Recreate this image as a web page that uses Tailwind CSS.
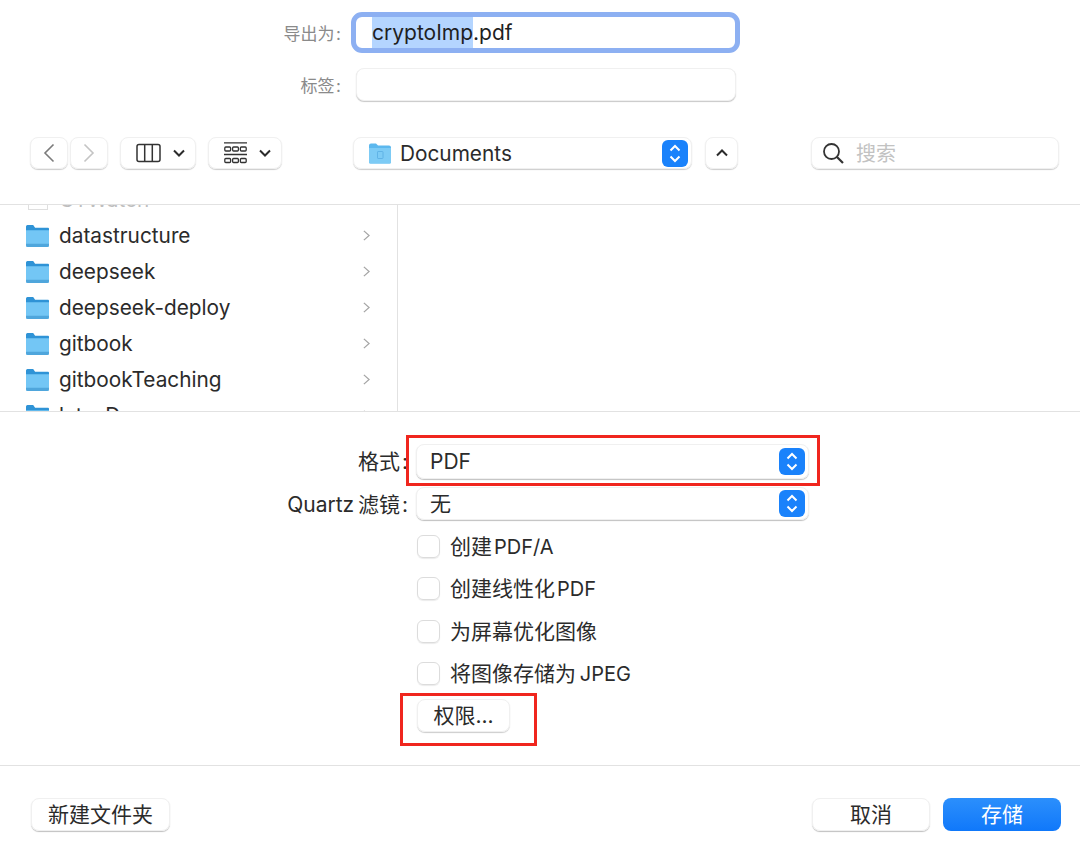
<!doctype html>
<html lang="zh">
<head>
<meta charset="utf-8">
<script src="https://cdn.jsdelivr.net/npm/@tailwindcss/browser@4"></script>
</head>
<body class="bg-white">
<div class="relative w-[1080px] h-[858px] overflow-hidden bg-white text-[#2b2b2b] text-[21px] font-['Inter','Noto_Sans_CJK_SC',sans-serif]">

  <!-- top -->
  <section class="h-[205px] border-b border-[#e2e2e2] flex flex-col">
    <div class="flex items-center h-[41px] mt-[12px]">
      <div class="w-[341px] mt-[4px] text-right text-[#8a8a8a] text-[17px]">导出为&#8202;:</div>
      <div class="ml-[10px] w-[389px] h-[41px] rounded-[11px] border-[5px] border-[#8db0f2] bg-white flex items-center pl-[16px] text-[#1f1f1f]"><span class="bg-[#b4d5ff]">cryptoImp</span>.pdf</div>
    </div>
    <div class="flex items-center h-[33px] mt-[15px]">
      <div class="w-[341px] mt-[4px] text-right text-[#8a8a8a] text-[17px]">标签&#8202;:</div>
      <div class="ml-[15px] w-[380px] h-[33px] rounded-[8px] border border-[#f0f0f0] shadow-[0_1px_1px_rgba(0,0,0,0.22)] bg-white"></div>
    </div>
    <div class="flex items-center h-[32px] mt-[36px]">
      <div class="ml-[30px] w-[38px] h-[32px] rounded-[8px] border border-[#f0f0f0] shadow-[0_1px_1px_rgba(0,0,0,0.2)] flex items-center justify-center">
        <svg width="12" height="20" viewBox="0 0 12 20" fill="none" stroke="#7b7b7b" stroke-width="1.6"><path d="M10.5 1.5 2 10l8.500 8.500"/></svg>
      </div>
      <div class="ml-[2px] w-[38px] h-[32px] rounded-[8px] border border-[#f0f0f0] shadow-[0_1px_1px_rgba(0,0,0,0.2)] flex items-center justify-center">
        <svg width="12" height="20" viewBox="0 0 12 20" fill="none" stroke="#c4c4c4" stroke-width="1.6"><path d="M1.500 1.500 10 10l-8.500 8.500"/></svg>
      </div>
      <div class="ml-[12px] w-[76px] h-[32px] rounded-[8px] border border-[#f0f0f0] shadow-[0_1px_1px_rgba(0,0,0,0.2)] flex items-center pl-[15px]">
        <svg width="25" height="20" viewBox="0 0 25 20" fill="none" stroke="#333" stroke-width="1.500"><rect x="1" y="1.500" width="23" height="17" rx="2"/><path d="M8.700 1.500v17M16.300 1.500v17"/></svg>
        <svg class="ml-[12px]" width="12" height="8" viewBox="0 0 12 8" fill="none" stroke="#2b2b2b" stroke-width="2"><path d="m1 1.500 5 5 5-5"/></svg>
      </div>
      <div class="ml-[12px] w-[74px] h-[32px] rounded-[8px] border border-[#f0f0f0] shadow-[0_1px_1px_rgba(0,0,0,0.2)] flex items-center pl-[15px]">
        <svg width="23" height="23" viewBox="0 0 23 23" fill="none" stroke="#333" stroke-width="1.300"><path d="M0 .800h23M0 12.500h23"/><rect x=".8" y="5" width="5.800" height="4" rx="1"/><rect x="8.600" y="5" width="5.800" height="4" rx="1"/><rect x="16.400" y="5" width="5.800" height="4" rx="1"/><rect x=".8" y="16.500" width="5.800" height="4" rx="1"/><rect x="8.600" y="16.500" width="5.800" height="4" rx="1"/><rect x="16.400" y="16.500" width="5.800" height="4" rx="1"/></svg>
        <svg class="ml-[12px]" width="12" height="8" viewBox="0 0 12 8" fill="none" stroke="#2b2b2b" stroke-width="2"><path d="m1 1.500 5 5 5-5"/></svg>
      </div>
      <div class="ml-[71px] w-[339px] h-[32px] rounded-[8px] border border-[#f0f0f0] shadow-[0_1px_1px_rgba(0,0,0,0.2)] flex items-center pl-[14px] pr-[3px]">
        <svg width="24" height="22" viewBox="0 0 24 22"><path d="M1 3.500a2 2 0 0 1 2-2h5l2 2h11a2 2 0 0 1 2 2V20a1.500 1.500 0 0 1-1.500 1.500h-19A1.500 1.500 0 0 1 1 20Z" fill="#5cb8ee"/><path d="M1 6h22v14a1.500 1.500 0 0 1-1.500 1.500h-19A1.500 1.500 0 0 1 1 20Z" fill="#7dcbf5"/><rect x="9.500" y="9.500" width="5.500" height="7" rx=".6" fill="none" stroke="#5cb0e4" stroke-width=".9"/></svg>
        <span class="ml-[8px] mt-[2px] flex-1 text-[20.8px]">Documents</span>
        <svg width="26" height="27" viewBox="0 0 26 27"><rect width="26" height="27" rx="6" fill="#1a82fb"/><path d="m8.500 10.500 4.500-4.500 4.500 4.500M8.500 16.500l4.500 4.500 4.500-4.500" fill="none" stroke="#fff" stroke-width="2"/></svg>
      </div>
      <div class="ml-[13px] w-[33px] h-[32px] rounded-[8px] border border-[#f0f0f0] shadow-[0_1px_1px_rgba(0,0,0,0.2)] flex items-center justify-center">
        <svg width="12" height="8" viewBox="0 0 12 8" fill="none" stroke="#2b2b2b" stroke-width="2"><path d="m1 6.500 5-5 5 5"/></svg>
      </div>
      <div class="ml-[73px] w-[248px] h-[32px] rounded-[8px] border border-[#f0f0f0] shadow-[0_1px_1px_rgba(0,0,0,0.2)] flex items-center pl-[10px]">
        <svg width="22" height="22" viewBox="0 0 22 22" fill="none" stroke="#333" stroke-width="1.800"><circle cx="9.500" cy="9.500" r="7.500"/><path d="m15 15 6 6" stroke-width="2.200"/></svg>
        <span class="ml-[12px] mt-[2px] text-[20px] text-[#c2c2c2]">搜索</span>
      </div>
    </div>
  </section>

  <!-- browser -->
  <section class="h-[207px] border-b border-[#e2e2e2] flex overflow-hidden">
    <div class="w-[398px] border-r border-[#e2e2e2] pl-[26px] pr-[27px] -mt-[24px] text-[20.8px]">
      <div class="h-[36px] flex items-center opacity-30">
        <div class="w-[23px] flex justify-center"><div class="w-[20px] h-[22px] border border-[#999]"></div></div>
        <span class="ml-[10px] mt-[2px] flex-1">GTWatch</span>
      </div>
      <div class="h-[36px] flex items-center">
        <svg width="23" height="23" viewBox="0 0 24 22" preserveAspectRatio="none"><path d="M0 2.500A1.500 1.500 0 0 1 1.500 1h6l2 2.500H23a1 1 0 0 1 1 1V20a2 2 0 0 1-2 2H2a2 2 0 0 1-2-2Z" fill="#2f93d6"/><path d="M0 6h24v14a2 2 0 0 1-2 2H2a2 2 0 0 1-2-2Z" fill="#73c6f5"/><path d="M0 19h24v1a2 2 0 0 1-2 2H2a2 2 0 0 1-2-2Z" fill="#4fa6dc"/></svg>
        <span class="ml-[10px] mt-[2px] flex-1">datastructure</span>
        <svg width="7" height="11" viewBox="0 0 8 14" preserveAspectRatio="none" fill="none" stroke="#a5a5a5" stroke-width="1.400"><path d="m1 1 6 6-6 6"/></svg>
      </div>
      <div class="h-[36px] flex items-center">
        <svg width="23" height="23" viewBox="0 0 24 22" preserveAspectRatio="none"><path d="M0 2.500A1.500 1.500 0 0 1 1.500 1h6l2 2.500H23a1 1 0 0 1 1 1V20a2 2 0 0 1-2 2H2a2 2 0 0 1-2-2Z" fill="#2f93d6"/><path d="M0 6h24v14a2 2 0 0 1-2 2H2a2 2 0 0 1-2-2Z" fill="#73c6f5"/><path d="M0 19h24v1a2 2 0 0 1-2 2H2a2 2 0 0 1-2-2Z" fill="#4fa6dc"/></svg>
        <span class="ml-[10px] mt-[2px] flex-1">deepseek</span>
        <svg width="7" height="11" viewBox="0 0 8 14" preserveAspectRatio="none" fill="none" stroke="#a5a5a5" stroke-width="1.400"><path d="m1 1 6 6-6 6"/></svg>
      </div>
      <div class="h-[36px] flex items-center">
        <svg width="23" height="23" viewBox="0 0 24 22" preserveAspectRatio="none"><path d="M0 2.500A1.500 1.500 0 0 1 1.500 1h6l2 2.500H23a1 1 0 0 1 1 1V20a2 2 0 0 1-2 2H2a2 2 0 0 1-2-2Z" fill="#2f93d6"/><path d="M0 6h24v14a2 2 0 0 1-2 2H2a2 2 0 0 1-2-2Z" fill="#73c6f5"/><path d="M0 19h24v1a2 2 0 0 1-2 2H2a2 2 0 0 1-2-2Z" fill="#4fa6dc"/></svg>
        <span class="ml-[10px] mt-[2px] flex-1">deepseek-deploy</span>
        <svg width="7" height="11" viewBox="0 0 8 14" preserveAspectRatio="none" fill="none" stroke="#a5a5a5" stroke-width="1.400"><path d="m1 1 6 6-6 6"/></svg>
      </div>
      <div class="h-[36px] flex items-center">
        <svg width="23" height="23" viewBox="0 0 24 22" preserveAspectRatio="none"><path d="M0 2.500A1.500 1.500 0 0 1 1.500 1h6l2 2.500H23a1 1 0 0 1 1 1V20a2 2 0 0 1-2 2H2a2 2 0 0 1-2-2Z" fill="#2f93d6"/><path d="M0 6h24v14a2 2 0 0 1-2 2H2a2 2 0 0 1-2-2Z" fill="#73c6f5"/><path d="M0 19h24v1a2 2 0 0 1-2 2H2a2 2 0 0 1-2-2Z" fill="#4fa6dc"/></svg>
        <span class="ml-[10px] mt-[2px] flex-1">gitbook</span>
        <svg width="7" height="11" viewBox="0 0 8 14" preserveAspectRatio="none" fill="none" stroke="#a5a5a5" stroke-width="1.400"><path d="m1 1 6 6-6 6"/></svg>
      </div>
      <div class="h-[36px] flex items-center">
        <svg width="23" height="23" viewBox="0 0 24 22" preserveAspectRatio="none"><path d="M0 2.500A1.500 1.500 0 0 1 1.500 1h6l2 2.500H23a1 1 0 0 1 1 1V20a2 2 0 0 1-2 2H2a2 2 0 0 1-2-2Z" fill="#2f93d6"/><path d="M0 6h24v14a2 2 0 0 1-2 2H2a2 2 0 0 1-2-2Z" fill="#73c6f5"/><path d="M0 19h24v1a2 2 0 0 1-2 2H2a2 2 0 0 1-2-2Z" fill="#4fa6dc"/></svg>
        <span class="ml-[10px] mt-[2px] flex-1">gitbookTeaching</span>
        <svg width="7" height="11" viewBox="0 0 8 14" preserveAspectRatio="none" fill="none" stroke="#a5a5a5" stroke-width="1.400"><path d="m1 1 6 6-6 6"/></svg>
      </div>
      <div class="h-[36px] flex items-center">
        <svg width="23" height="23" viewBox="0 0 24 22" preserveAspectRatio="none"><path d="M0 2.500A1.500 1.500 0 0 1 1.500 1h6l2 2.500H23a1 1 0 0 1 1 1V20a2 2 0 0 1-2 2H2a2 2 0 0 1-2-2Z" fill="#2f93d6"/><path d="M0 6h24v14a2 2 0 0 1-2 2H2a2 2 0 0 1-2-2Z" fill="#73c6f5"/></svg>
        <span class="ml-[10px] mt-[2px] flex-1">latexDev</span>
        <svg width="7" height="11" viewBox="0 0 8 14" preserveAspectRatio="none" fill="none" stroke="#a5a5a5" stroke-width="1.400"><path d="m1 1 6 6-6 6"/></svg>
      </div>
    </div>
  </section>

  <!-- options -->
  <section class="h-[354px] border-b border-[#e2e2e2] pt-[32px]">
    <div class="flex items-center h-[35px]">
      <div class="w-[408px] text-right">格式&#8202;:</div>
      <div class="ml-[8px] w-[393px] h-[35px] rounded-[8px] border border-[#f0f0f0] shadow-[0_1px_1px_rgba(0,0,0,0.25)] flex items-center pl-[13px] pr-[3px]">
        <span class="flex-1">PDF</span>
        <svg width="26" height="27" viewBox="0 0 26 27"><rect width="26" height="27" rx="6" fill="#1a82fb"/><path d="m8.500 10.500 4.500-4.500 4.500 4.500M8.500 16.500l4.500 4.500 4.500-4.500" fill="none" stroke="#fff" stroke-width="2"/></svg>
      </div>
    </div>
    <div class="flex items-center h-[33px] mt-[8px]">
      <div class="w-[408px] mt-[2px] text-right">Quartz&#8201;滤镜&#8202;:</div>
      <div class="ml-[8px] w-[393px] h-[33px] rounded-[8px] border border-[#f0f0f0] shadow-[0_1px_1px_rgba(0,0,0,0.25)] flex items-center pl-[13px] pr-[3px]">
        <span class="flex-1">无</span>
        <svg width="26" height="27" viewBox="0 0 26 27"><rect width="26" height="27" rx="6" fill="#1a82fb"/><path d="m8.500 10.500 4.500-4.500 4.500 4.500M8.500 16.500l4.500 4.500 4.500-4.500" fill="none" stroke="#fff" stroke-width="2"/></svg>
      </div>
    </div>
    <div class="flex items-center h-[23px] mt-[15px] ml-[417px]">
      <div class="w-[23px] h-[23px] rounded-[6px] border border-[#dcdcdc] shadow-[0_1px_1px_rgba(0,0,0,0.08)]"></div>
      <span class="ml-[10px]">创建&#8202;<span class="text-[20px]">PDF/A</span></span>
    </div>
    <div class="flex items-center h-[23px] mt-[19px] ml-[417px]">
      <div class="w-[23px] h-[23px] rounded-[6px] border border-[#dcdcdc] shadow-[0_1px_1px_rgba(0,0,0,0.08)]"></div>
      <span class="ml-[10px]">创建线性化&#8202;<span class="text-[20px]">PDF</span></span>
    </div>
    <div class="flex items-center h-[23px] mt-[20px] ml-[417px]">
      <div class="w-[23px] h-[23px] rounded-[6px] border border-[#dcdcdc] shadow-[0_1px_1px_rgba(0,0,0,0.08)]"></div>
      <span class="ml-[10px]">为屏幕优化图像</span>
    </div>
    <div class="flex items-center h-[23px] mt-[19px] ml-[417px]">
      <div class="w-[23px] h-[23px] rounded-[6px] border border-[#dcdcdc] shadow-[0_1px_1px_rgba(0,0,0,0.08)]"></div>
      <span class="ml-[10px]">将图像存储为&#8201;<span class="text-[20px]">JPEG</span></span>
    </div>
    <div class="ml-[417px] mt-[14px] w-[93px] h-[33px] rounded-[8px] border border-[#f0f0f0] shadow-[0_1px_1px_rgba(0,0,0,0.2)] flex items-center justify-center">权限...</div>
  </section>

  <!-- footer -->
  <section class="h-[91px] pt-[32px] flex pl-[31px]">
    <div class="w-[139px] h-[33px] rounded-[8px] border border-[#f0f0f0] shadow-[0_1px_1px_rgba(0,0,0,0.25)] flex items-center justify-center">新建文件夹</div>
    <div class="ml-[642px] w-[118px] h-[33px] rounded-[8px] border border-[#f0f0f0] shadow-[0_1px_1px_rgba(0,0,0,0.25)] flex items-center justify-center">取消</div>
    <div class="ml-[13px] w-[118px] h-[33px] rounded-[8px] bg-gradient-to-b from-[#2b8ffc] to-[#0f78fa] text-white flex items-center justify-center">存储</div>
  </section>

  <!-- annotation rectangles -->
  <div class="absolute left-[406px] top-[435px] w-[414px] h-[51px] border-[3px] border-[#f0261e]"></div>
  <div class="absolute left-[400px] top-[693px] w-[137px] h-[53px] border-[3px] border-[#f0261e]"></div>
</div>
</body>
</html>
